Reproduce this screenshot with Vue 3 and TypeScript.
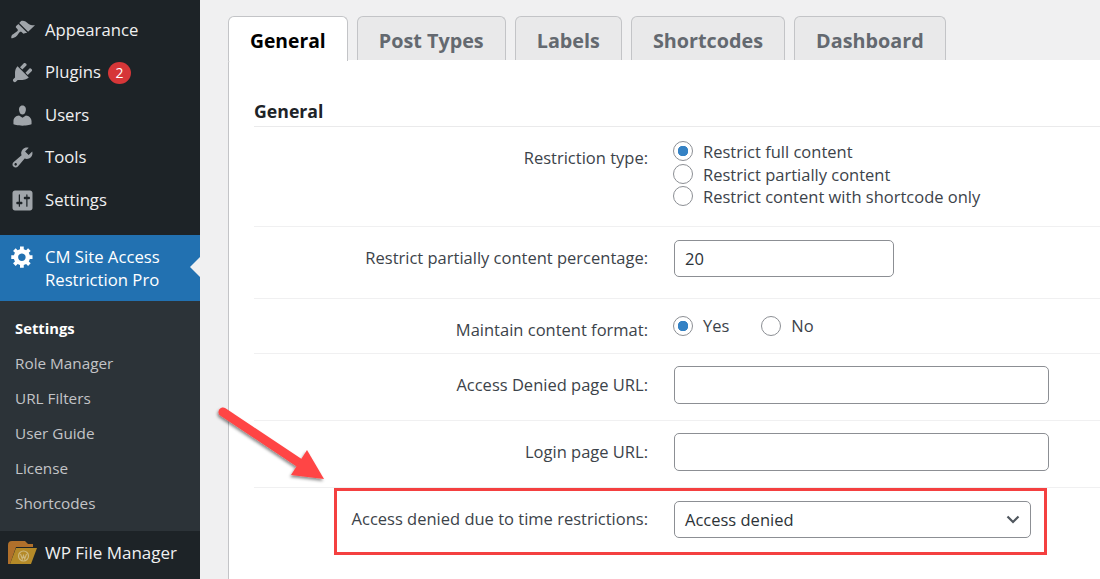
<script setup lang="ts">
interface MenuItem { label: string; d: string; badge?: string }
const menu: MenuItem[] = [
  { label: 'Appearance', d: 'M14.48 11.06L7.41 3.99l1.5-1.5c.5-.56 2.3-.47 3.51.32 1.21.8 1.43 1.28 2.91 2.1 1.18.64 2.45 1.26 4.68.85zm-.71.71L6.7 4.7 4.93 6.47c-.39.39-.39 1.02 0 1.41l1.06 1.06c.39.39.39 1.03 0 1.42-.6.6-1.43 1.11-2.21 1.69-.35.26-.7.53-1.01.84C1.43 13.23.77 15.1 1.1 16.1c.99.32 2.87-.33 4.2-1.67.31-.31.58-.66.85-1.02.57-.78 1.08-1.6 1.69-2.21.39-.39 1.02-.39 1.41 0l1.06 1.06c.39.39 1.02.39 1.41 0z' },
  { label: 'Plugins', badge: '2', d: 'M13.11 4.36L9.87 7.6 8 5.73l3.24-3.24c.35-.34 1.05-.2 1.56.32.52.51.66 1.21.31 1.55zm-8 1.77l.91-1.12 9.01 9.01-1.19.84c-.71.71-2.63 1.16-3.82 1.16H6.14L4.9 17.26c-.59.59-1.54.59-2.12 0-.59-.58-.59-1.53 0-2.12l1.24-1.24v-3.88c0-1.13.4-3.19 1.09-3.89zm7.26 3.97l3.24-3.24c.34-.35 1.04-.21 1.55.31.52.51.66 1.21.31 1.55l-3.24 3.25z' },
  { label: 'Users', d: 'M10 9.25c-2.27 0-2.73-3.44-2.73-3.44C7 4.02 7.82 2 9.97 2c2.16 0 2.98 2.02 2.71 3.81 0 0-.41 3.44-2.68 3.44zm0 2.57L12.72 10c2.39 0 4.52 2.33 4.52 4.53v2.49s-3.65 1.13-7.24 1.13c-3.65 0-7.24-1.13-7.24-1.13v-2.49c0-2.25 1.94-4.48 4.47-4.48z' },
  { label: 'Tools', d: 'M16.68 9.77c-1.34 1.34-3.3 1.67-4.95.99l-5.41 6.52c-.99.99-2.59.99-3.58 0s-.99-2.59 0-3.57l6.52-5.42c-.68-1.65-.35-3.61.99-4.95 1.28-1.28 3.12-1.62 4.72-1.06l-2.89 2.89 2.82 2.82 2.86-2.87c.53 1.58.18 3.39-1.08 4.65zM3.81 16.21c.4.39 1.04.39 1.43 0 .4-.4.4-1.04 0-1.43-.39-.4-1.03-.4-1.43 0-.39.39-.39 1.03 0 1.43z' },
  { label: 'Settings', d: 'M18 16V4c0-1.1-.9-2-2-2H4c-1.1 0-2 .9-2 2v12c0 1.1.9 2 2 2h12c1.1 0 2-.9 2-2zM8 11h1c.55 0 1 .45 1 1s-.45 1-1 1H8v1.5c0 .28-.22.5-.5.5s-.5-.22-.5-.5V13H6c-.55 0-1-.45-1-1s.45-1 1-1h1V5.5c0-.28.22-.5.5-.5s.5.22.5.5V11zm5-2h-1c-.55 0-1-.45-1-1s.45-1 1-1h1V5.5c0-.28.22-.5.5-.5s.5.22.5.5V7h1c.55 0 1 .45 1 1s-.45 1-1 1h-1v5.5c0 .28-.22.5-.5.5s-.5-.22-.5-.5V9z' },
]
const gear = 'M18 12h-2.18c-.17.7-.44 1.35-.81 1.93l1.54 1.54-2.1 2.1-1.54-1.54c-.58.36-1.23.63-1.91.79V19H8v-2.18c-.68-.16-1.33-.43-1.91-.79l-1.54 1.54-2.12-2.12 1.54-1.54c-.36-.58-.63-1.23-.79-1.91H1V9.03h2.17c.16-.7.44-1.35.8-1.94L2.43 5.55l2.1-2.1 1.54 1.54c.58-.37 1.24-.64 1.93-.81V2h3v2.18c.68.16 1.33.43 1.91.79l1.54-1.54 2.12 2.12-1.54 1.54c.36.59.64 1.24.8 1.94H18V12zm-8.5 1.5c1.66 0 3-1.34 3-3s-1.34-3-3-3-3 1.34-3 3 1.34 3 3 3z'
const sub = ['Settings', 'Role Manager', 'URL Filters', 'User Guide', 'License', 'Shortcodes']
const tabs = ['General', 'Post Types', 'Labels', 'Shortcodes', 'Dashboard']
</script>

<template>
  <div class="page">
    <aside class="sidebar">
      <a v-for="m in menu" :key="m.label" class="item">
        <svg class="icon" viewBox="0 0 20 20"><path :d="m.d" /></svg>
        <span class="txt">{{ m.label }}</span>
        <span v-if="m.badge" class="badge">{{ m.badge }}</span>
      </a>
      <div class="current">
        <svg class="icon gear" viewBox="0 0 20 20"><path :d="gear" /></svg>
        <span>CM Site Access<br />Restriction Pro</span>
        <i class="notch"></i>
      </div>
      <ul class="submenu">
        <li v-for="(s, i) in sub" :key="s" :class="{ active: i === 0 }">{{ s }}</li>
      </ul>
      <a class="item fm">
        <svg class="folder" viewBox="0 0 29 23">
          <path d="M0 4Q0 0 4 0H17L20 3H25V6H8L2 23H0Z" fill="#b0702b" />
          <path d="M8 7H29L23 23H2Z" fill="#b48a28" />
          <circle cx="15.500" cy="15" r="5" fill="none" stroke="#cdb77c" stroke-width="1.200" />
          <path d="M12.500 13L14.300 18L15.500 14.500L16.700 18L18.500 13" fill="none" stroke="#cdb77c" stroke-width="1.100" />
        </svg>
        <span>WP File Manager</span>
      </a>
    </aside>

    <main class="main">
      <nav class="tabs">
        <a v-for="(t, i) in tabs" :key="t" class="tab" :class="{ on: i === 0 }">{{ t }}</a>
      </nav>
      <section class="panel">
        <h2>General</h2>

        <div class="row r1">
          <label>Restriction type:</label>
          <div class="stack">
            <label class="radio"><input type="radio" name="a" checked /><span>Restrict full content</span></label>
            <label class="radio"><input type="radio" name="a" /><span>Restrict partially content</span></label>
            <label class="radio"><input type="radio" name="a" /><span>Restrict content with shortcode only</span></label>
          </div>
        </div>

        <div class="row r2">
          <label>Restrict partially content percentage:</label>
          <input class="field short" type="text" value="20" />
        </div>

        <div class="row r3">
          <label>Maintain content format:</label>
          <div class="inline">
            <label class="radio"><input type="radio" name="b" checked /><span>Yes</span></label>
            <label class="radio"><input type="radio" name="b" /><span>No</span></label>
          </div>
        </div>

        <div class="row r4">
          <label>Access Denied page URL:</label>
          <input class="field" type="text" />
        </div>

        <div class="row r4">
          <label>Login page URL:</label>
          <input class="field" type="text" />
        </div>

        <div class="row r6">
          <label>Access denied due to time restrictions:</label>
          <div class="select">
            <span>Access denied</span>
            <svg width="14" height="9" viewBox="0 0 14 9"><path d="M1.500 1.500L7 7L12.500 1.500" fill="none" stroke="#50575e" stroke-width="2.200" /></svg>
          </div>
        </div>
      </section>
    </main>

    <div class="redbox"></div>
    <svg class="arrow" width="130" height="90" viewBox="0 0 130 90">
      <defs>
        <filter id="sh" x="-20%" y="-20%" width="150%" height="150%">
          <feDropShadow dx="-1" dy="2" stdDeviation="1.800" flood-color="#000" flood-opacity="0.450" />
        </filter>
      </defs>
      <g filter="url(#sh)" fill="#ff4444">
        <path d="M7 12L85 64" stroke="#ff4444" stroke-width="9" stroke-linecap="round" />
        <path d="M91 50L108 79L75 75Z" />
      </g>
    </svg>
  </div>
</template>

<style>
html, body { margin: 0; background: #f0f0f1; }
</style>

<style scoped>
.page {
  position: relative;
  display: flex;
  width: 1100px;
  height: 579px;
  overflow: hidden;
  background: #f0f0f1;
  font-family: "Open Sans", "Noto Sans", sans-serif;
  font-size: 16.500px;
  color: #3c434a;
}
.sidebar {
  flex: 0 0 200px;
  background: #1d2327;
  color: #f0f0f1;
  padding-top: 9px;
  display: flex;
  flex-direction: column;
}
.item {
  height: 42.500px;
  display: flex;
  align-items: center;
  padding-left: 10px;
  font-size: 16.700px;
}
.txt { margin-top: -2px; }
.icon {
  width: 25px;
  height: 25px;
  margin-right: 10px;
  flex: none;
  fill: #a0a5aa;
}
.badge {
  margin-left: 7px;
  width: 23px;
  height: 22px;
  border-radius: 50%;
  background: #d63638;
  color: #fff;
  font-size: 14px;
  display: flex;
  align-items: center;
  justify-content: center;
}
.current {
  position: relative;
  margin-top: 13px;
  height: 66px;
  background: #2271b1;
  color: #fff;
  display: flex;
  align-items: flex-start;
  padding: 10px 0 0 10px;
  box-sizing: border-box;
  font-size: 16.700px;
  line-height: 23px;
}
.gear { fill: #fff; margin-top: -1px; }
.notch {
  position: absolute;
  right: 0;
  top: 22px;
  border: 10px solid transparent;
  border-right-color: #f0f0f1;
  border-left-width: 0;
}
.submenu {
  list-style: none;
  margin: 0;
  padding: 10px 0 9px;
  background: #2c3338;
  color: #c3c4c7;
  font-size: 15.300px;
}
.submenu li {
  height: 35.200px;
  line-height: 35.200px;
  padding-left: 15px;
}
.submenu .active { color: #fff; font-weight: 700; font-size: 14.800px; }
.fm { height: 44px; padding-left: 8px; color: #f0f0f1; font-size: 17px; }
.folder { width: 29px; height: 23px; margin-right: 8px; flex: none; }

.main { flex: 1; padding: 16px 0 0 28px; min-width: 0; }
.tabs { display: flex; gap: 9px; height: 44px; }
.tab {
  height: 44px;
  box-sizing: border-box;
  padding: 0 21px;
  line-height: 47px;
  border: 1px solid #c3c4c7;
  border-bottom: 0;
  border-radius: 6px 6px 0 0;
  background: #e9e9ea;
  color: #646970;
  font-size: 19.800px;
  font-weight: 700;
  white-space: nowrap;
}
.tab.on { background: #fff; color: #000; position: relative; z-index: 1; height: 45px; font-size: 19.300px; }
.panel {
  width: 900px;
  height: 560px;
  box-sizing: border-box;
  background: #fff;
  border-left: 1px solid #c3c4c7;
  border-radius: 3px 0 0 0;
  padding: 40px 0 0 25px;
}
h2 {
  margin: 0;
  height: 26px;
  line-height: 22px;
  font-size: 17.700px;
  font-weight: 700;
  color: #1d2327;
  border-bottom: 1px solid #eaeaeb;
}
.row {
  display: flex;
  align-items: center;
  border-bottom: 1px solid #f0f0f1;
  box-sizing: border-box;
}
.row:last-child { border-bottom: 0; }
.row > label {
  width: 394px;
  margin-right: 26px;
  text-align: right;
  flex: none;
  margin-top: -2px;
}
.r1 { height: 100px; align-items: flex-start; padding-top: 13px; }
.r1 > label { padding-top: 6px; margin-top: 0; }
.r2 { height: 72px; padding-bottom: 8px; }
.r3 { height: 55px; }
.r3 > label { padding-top: 6px; margin-top: 0; }
.r4 { height: 67px; padding-bottom: 4px; }
.r6 { height: 64px; padding-bottom: 2px; }
.stack { display: flex; flex-direction: column; line-height: 22.500px; }
.stack span { padding-top: 2px; }
.inline { display: flex; gap: 33px; margin-top: -1px; }
.radio { display: flex; align-items: center; height: 22.500px; }
.radio input {
  appearance: none;
  width: 20px;
  height: 20px;
  margin: 0 10px 0 -1px;
  border: 1px solid #8c8f94;
  border-radius: 50%;
  background: #fff;
  box-sizing: border-box;
  flex: none;
}
.radio input:checked { background: radial-gradient(circle, #3582c4 0 5px, #fff 5.500px); }
.field {
  width: 375px;
  height: 38px;
  box-sizing: border-box;
  border: 1px solid #8c8f94;
  border-radius: 5px;
  padding: 0 10px;
  font: inherit;
  color: #2c3338;
  background: #fff;
}
.short { width: 220px; height: 37px; }
.select {
  width: 357px;
  height: 37px;
  box-sizing: border-box;
  border: 1px solid #8c8f94;
  border-radius: 5px;
  padding: 0 10px;
  display: flex;
  align-items: center;
  justify-content: space-between;
  color: #2c3338;
}
.redbox {
  position: absolute;
  left: 334px;
  top: 488px;
  width: 713px;
  height: 67px;
  box-sizing: border-box;
  border: 3px solid #f44040;
}
.arrow {
  position: absolute;
  left: 216px;
  top: 400px;
  overflow: visible;
}
</style>
